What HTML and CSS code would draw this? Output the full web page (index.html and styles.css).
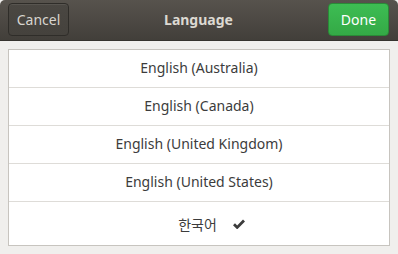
FILE: index.html
```html
<!DOCTYPE html>
<html>
<head>
<meta charset="utf-8">
<link rel="stylesheet" href="styles.css">
</head>
<body>
<div class="dialog">
  <header class="headerbar">
    <button class="btn btn-cancel">Cancel</button>
    <div class="title">Language</div>
    <button class="btn btn-done">Done</button>
  </header>
  <main class="content">
    <ul class="list">
      <li class="row">English (Australia)</li>
      <li class="row">English (Canada)</li>
      <li class="row">English (United Kingdom)</li>
      <li class="row">English (United States)</li>
      <li class="row row-last"><span class="ko">한국어</span><svg class="check" width="12" height="10" viewBox="0 0 12 10"><path d="M1 5.2 L4.2 8.4 L11 1.6" fill="none" stroke="#3c3c3c" stroke-width="2.8" stroke-linejoin="miter"/></svg></li>
    </ul>
  </main>
</div>
</body>
</html>
```
FILE: styles.css
```css
* { box-sizing: border-box; }
html, body { margin: 0; padding: 0; }
body {
  width: 398px;
  height: 254px;
  background: #f0efed;
  font-family: "Noto Sans", "Noto Sans CJK KR", sans-serif;
  overflow: hidden;
}
.dialog { display: flex; flex-direction: column; height: 254px; }
.headerbar {
  height: 41px;
  display: flex;
  align-items: center;
  justify-content: space-between;
  padding: 0 9px 1px 8px;
  background: linear-gradient(#57534d, #423f3a);
  border-bottom: 1px solid #36332f;
  border-radius: 5px 5px 0 0;
}
.btn {
  height: 33px;
  width: 61px;
  border-radius: 4px;
  font-family: inherit;
  font-size: 14px;
  padding: 0 0 1px;
}
.btn-cancel {
  background: linear-gradient(#4a4742, #45423d);
  border: 1px solid #2f2d29;
  box-shadow: inset 0 1px 0 rgba(255,255,255,0.08);
  color: #d8d5cf;
}
.btn-done {
  background: linear-gradient(#3dbd53, #34a946);
  border: 1px solid #2a8a37;
  color: #ffffff;
}
.title {
  color: #dcd9d2;
  font-weight: bold;
  font-size: 14px;
  padding-bottom: 1px;
}
.content { flex: 1; padding: 8px 8px 0 8px; }
.list {
  list-style: none;
  margin: 0;
  padding: 0;
  width: 382px;
  background: #ffffff;
  border: 1px solid #c7c4bf;
}
.row {
  height: 38px;
  display: flex;
  align-items: center;
  justify-content: center;
  font-size: 14px;
  color: #3c3c3c;
  border-bottom: 1px solid #dedcd8;
  padding-bottom: 2px;
}
.row-last { height: 43px; border-bottom: none; padding-bottom: 0; gap: 16px; padding-left: 25px; }
.ko { font-family: "Noto Sans CJK KR", sans-serif; font-size: 14px; }
.check { display: block; }
```
